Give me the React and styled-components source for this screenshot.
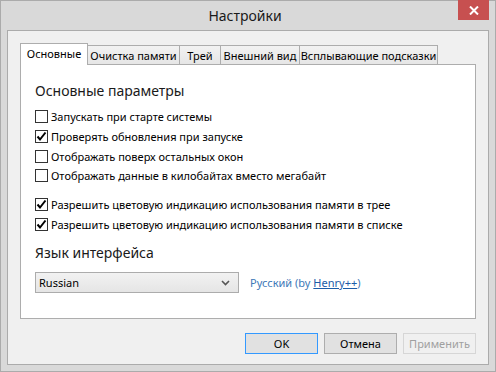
import React from "react";
import styled, { createGlobalStyle, css } from "styled-components";

const Global = createGlobalStyle`
  html, body { margin: 0; padding: 0; background: #dadada; }
  * { box-sizing: border-box; }
  body { font-family: "Noto Sans", "Open Sans", sans-serif; font-size: 11px; color: #000; }
`;

const Window = styled.div`
  width: 496px;
  height: 372px;
  background: #d9d9d9;
  border: 1px solid #ababab;
  display: flex;
  flex-direction: column;
`;

const TitleBar = styled.div`
  height: 29px;
  display: grid;
  grid-template-columns: 1fr auto 1fr;
  align-items: start;
  padding-right: 6px;
`;

const Title = styled.div`
  grid-column: 2;
  font-size: 14px;
  line-height: 29px;
  color: #1a1a1a;
`;

const CloseButton = styled.div`
  grid-column: 3;
  justify-self: end;
  width: 31px;
  height: 20px;
  background: #c75050;
  display: flex;
  align-items: center;
  justify-content: center;
  margin-top: -1px;
`;

const Client = styled.div`
  flex: 1;
  margin: 0 6px 6px 6px;
  border: 1px solid #ababab;
  background: #f0f0f0;
  padding: 12px 12px 0 12px;
  display: flex;
  flex-direction: column;
`;

const TabStrip = styled.div`
  display: flex;
  align-items: flex-end;
  height: 21px;
  position: relative;
  z-index: 1;
`;

const Tab = styled.div`
  width: ${(p) => p.$w}px;
  height: ${(p) => (p.$active ? "22px" : "19px")};
  border: 1px solid #adadad;
  border-bottom: none;
  margin-left: ${(p) => (p.$first ? "0" : "-1px")};
  margin-bottom: ${(p) => (p.$active ? "-1px" : "0")};
  background: ${(p) => (p.$active ? "#fff" : "linear-gradient(#f2f2f2, #e6e6e6)")};
  line-height: ${(p) => (p.$active ? "20px" : "19px")};
  text-align: center;
  white-space: nowrap;
  ${(p) =>
    p.$active &&
    css`
      position: relative;
      z-index: 2;
    `}
`;

const Panel = styled.div`
  height: 255px;
  background: #fff;
  border: 1px solid #adadad;
  padding: 15px 14px 0 14px;
  display: flex;
  flex-direction: column;
`;

const Heading = styled.div`
  font-size: 14px;
  line-height: 22px;
  color: #1a1a1a;
  margin-bottom: ${(p) => p.$mb || "4px"};
`;

const CheckRow = styled.label`
  display: flex;
  align-items: center;
  gap: 3px;
  height: 19.7px;
  white-space: nowrap;
`;

const Box = styled.span`
  width: 13px;
  height: 13px;
  border: 1px solid #333;
  background: #fff;
  display: inline-flex;
  align-items: center;
  justify-content: center;
  flex-shrink: 0;
`;

const Group = styled.div`
  display: flex;
  flex-direction: column;
  margin-bottom: ${(p) => p.$mb || "0"};
`;

const LangRow = styled.div`
  display: flex;
  align-items: center;
  gap: 11px;
  margin-top: 4px;
`;

const Select = styled.div`
  width: 204px;
  height: 21px;
  border: 1px solid #acacac;
  background: linear-gradient(#f2f2f2, #e5e5e5);
  display: flex;
  align-items: center;
  justify-content: space-between;
  padding: 0 8px 0 3px;
`;

const Translator = styled.span`
  color: #3d78b8;
`;

const Link = styled.span`
  color: #1c5ca8;
  text-decoration: underline;
`;

const Footer = styled.div`
  display: flex;
  justify-content: flex-end;
  gap: 6px;
  margin-top: 14px;
`;

const Button = styled.div`
  width: 73px;
  height: 21px;
  display: flex;
  align-items: center;
  justify-content: center;
  background: ${(p) => (p.$disabled ? "#f0f0f0" : "#e1e1e1")};
  border: 1px solid
    ${(p) => (p.$default ? "#3399ff" : p.$disabled ? "#d6d6d6" : "#adadad")};
  color: ${(p) => (p.$disabled ? "#a0a0a0" : "#000")};
`;

const Check = () => (
  <svg width="11" height="11" viewBox="0 0 11 11">
    <path d="M1.5 5.5 L4 8.5 L9.5 1.5" fill="none" stroke="#000" strokeWidth="2" />
  </svg>
);

const CheckBox = ({ checked, children }) => (
  <CheckRow>
    <Box>{checked && <Check />}</Box>
    {children}
  </CheckRow>
);

const tabs = [
  ["Основные", 68],
  ["Очистка памяти", 93],
  ["Трей", 42],
  ["Внешний вид", 80],
  ["Всплывающие подсказки", 139],
];

export default function App() {
  return (
    <>
      <Global />
      <Window>
        <TitleBar>
          <Title>Настройки</Title>
          <CloseButton>
            <svg width="10" height="9" viewBox="0 0 10 9">
              <path d="M1 0.5 L9 8.5 M9 0.5 L1 8.5" stroke="#fff" strokeWidth="2" />
            </svg>
          </CloseButton>
        </TitleBar>
        <Client>
          <TabStrip>
            {tabs.map(([t, w], i) => (
              <Tab key={t} $w={w} $active={i === 0} $first={i === 0}>
                {t}
              </Tab>
            ))}
          </TabStrip>
          <Panel>
            <Heading $mb="5px">Основные параметры</Heading>
            <Group $mb="9px">
              <CheckBox>Запускать при старте системы</CheckBox>
              <CheckBox checked>Проверять обновления при запуске</CheckBox>
              <CheckBox>Отображать поверх остальных окон</CheckBox>
              <CheckBox>Отображать данные в килобайтах вместо мегабайт</CheckBox>
            </Group>
            <Group $mb="8px">
              <CheckBox checked>Разрешить цветовую индикацию использования памяти в трее</CheckBox>
              <CheckBox checked>Разрешить цветовую индикацию использования памяти в списке</CheckBox>
            </Group>
            <Heading>Язык интерфейса</Heading>
            <LangRow>
              <Select>
                <span>Russian</span>
                <svg width="9" height="6" viewBox="0 0 9 6">
                  <path d="M1 1 L4.5 4.5 L8 1" fill="none" stroke="#555" strokeWidth="1.6" />
                </svg>
              </Select>
              <Translator>
                Русский (by <Link>Henry++</Link>)
              </Translator>
            </LangRow>
          </Panel>
          <Footer>
            <Button $default>OK</Button>
            <Button>Отмена</Button>
            <Button $disabled>Применить</Button>
          </Footer>
        </Client>
      </Window>
    </>
  );
}
